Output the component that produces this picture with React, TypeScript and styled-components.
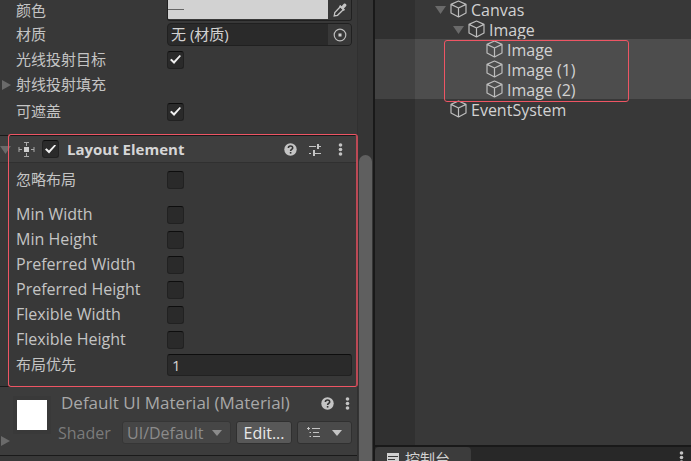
import React, { useId } from "react";
import styled, { createGlobalStyle } from "styled-components";

const GlobalStyle = createGlobalStyle`
  *, *::before, *::after { box-sizing: border-box; }
  body {
    margin: 0;
    background: #383838;
    color: #c4c4c4;
    font: 15px/20px "Open Sans", "Noto Sans CJK SC", sans-serif;
  }
  button, input, select { font: inherit; color: inherit; margin: 0; }
  svg { display: block; }
`;

const Editor = styled.div`
  display: flex;
  height: 100vh;
  overflow: hidden;
`;

const Inspector = styled.section`
  flex: 0 1 375px;
  min-width: 0;
  display: flex;
  border-right: 2px solid #191919;
`;

const InspectorBody = styled.div`
  flex: 1;
  min-width: 0;
  border-right: 1px solid #303030;
`;

const ScrollTrack = styled.div`
  flex: 0 0 15px;
  display: flex;
  padding: 155px 1px 0 1px;
  background: #353535;
`;

const ScrollThumb = styled.div`
  flex: 1;
  border-radius: 7px 7px 0 0;
  background: #5f5f5f;
`;

const Fields = styled.div<{ $bottom: number }>`
  padding-bottom: ${(p) => p.$bottom}px;
`;

const Row = styled.div<{ $height?: number; $after?: number }>`
  display: grid;
  grid-template-columns: 16px 151px minmax(0, 1fr);
  align-items: center;
  height: ${(p) => p.$height ?? 25}px;
  margin-bottom: ${(p) => p.$after ?? 0}px;
  padding-right: 5px;
`;

const Label = styled.label<{ $latin?: boolean }>`
  grid-column: 2;
  padding-bottom: 2px;
  font-size: ${(p) => (p.$latin ? 16 : 15)}px;
  white-space: nowrap;
`;

const IconButton = styled.button`
  display: grid;
  place-items: center;
  padding: 0;
  border: 0;
  background: none;
  color: #c4c4c4;
`;

const FoldButton = styled(IconButton)`
  grid-column: 1;
  justify-self: start;
  color: #6a6a6a;
`;

const RowFold = styled(FoldButton)`
  padding-left: 2px;
`;

const Check = styled.input`
  appearance: none;
  flex: none;
  display: grid;
  place-items: center;
  width: 17px;
  height: 18px;
  border: 1px solid #212121;
  border-top-color: #0d0d0d;
  border-radius: 3px;
  background: #2a2a2a;

  &:checked::after {
    content: "";
    width: 11px;
    height: 9px;
    background: #f0f0f0;
    clip-path: polygon(0 55%, 14% 42%, 36% 68%, 88% 0, 100% 12%, 37% 100%);
  }
`;

const TextField = styled.input`
  width: 100%;
  height: 22px;
  padding: 0 4px;
  border: 1px solid #212121;
  border-top-color: #0d0d0d;
  border-radius: 3px;
  background: #2a2a2a;
  color: #d2d2d2;
`;

const ColorField = styled.div`
  display: flex;
  align-self: start;
  height: 21px;
  border: 1px solid #202020;
  border-top: 0;
  border-radius: 0 0 3px 3px;
  overflow: hidden;
`;

const Swatch = styled.button`
  flex: 1;
  height: 19px;
  padding: 0;
  border: 0;
  background: linear-gradient(#666, #666) 0 9px / 16px 1px no-repeat #d2d2d2;
`;

const PickerButton = styled(IconButton)`
  width: 23px;
  background: #383838;
`;

const ObjectField = styled.div`
  display: flex;
  height: 23px;
  border: 1px solid #202020;
  border-radius: 4px;
  background: #2a2a2a;
  overflow: hidden;
`;

const ObjectName = styled.output`
  flex: 1;
  padding-left: 3px;
  color: #d2d2d2;
`;

const Component = styled.section`
  position: relative;
  border-top: 1px solid #1a1a1a;
`;

const ComponentHeader = styled.header`
  display: flex;
  align-items: center;
  height: 27px;
  margin-bottom: 4px;
  padding-right: 4px;
  border-bottom: 1px solid #303030;
  background: #3e3e3e;
`;

const HeaderFold = styled(FoldButton)`
  width: 18px;
  justify-items: start;
`;

const TitleLabel = styled.label`
  flex: 1;
  padding-left: 8px;
  font-weight: 700;
  color: #d6d6d6;
`;

const HeaderIcon = styled.span`
  width: 24px;
`;

const Actions = styled.div<{ $cell: number }>`
  display: grid;
  grid-auto-flow: column;
  grid-auto-columns: ${(p) => p.$cell}px;
  align-items: center;
`;

const Outline = styled.div`
  position: absolute;
  border: 1px solid #ee5564;
  border-radius: 3px;
  pointer-events: none;
`;

const ComponentOutline = styled(Outline)`
  inset: -2px -1px -1px 8px;
  border-right-width: 2px;
  border-right-color: #bc4955;
`;

const Material = styled.section`
  display: flex;
  height: 70px;
  border-top: 1px solid #1a1a1a;
  border-bottom: 1px solid #1a1a1a;
  background: #3c3c3c;
`;

const MaterialFold = styled(FoldButton)`
  align-self: flex-end;
  width: 13px;
  justify-items: start;
  padding: 0 0 8px 1px;
`;

const Preview = styled.div`
  width: 38px;
  height: 38px;
  margin: 9px 7px 0 0;
  border: 4px solid #393939;
  background: #fff;
`;

const MaterialBody = styled.div`
  flex: 1;
  min-width: 0;
  padding-top: 5px;
`;

const MaterialTitle = styled.div`
  display: flex;
  align-items: center;
  justify-content: space-between;
  height: 22px;
  padding: 0 0 0 3px;
  font-size: 17px;
  white-space: nowrap;
  color: #a8a8a8;
`;

const ShaderRow = styled.div`
  display: flex;
  align-items: center;
  height: 23px;
  margin-top: 7px;
  padding-right: 5px;
  font-size: 16px;
`;

const ShaderLabel = styled.label`
  flex: 1;
  color: #7b7b7b;
`;

const SelectBox = styled.div`
  display: grid;
  grid-template-columns: 1fr 12px;
  align-items: center;
  width: 109px;
  height: 23px;
  padding-right: 6px;
  border: 1px solid #363636;
  border-radius: 3px;
  background: #464646;
  color: #8b8b8b;
`;

const Select = styled.select`
  appearance: none;
  grid-area: 1 / 1 / 2 / 3;
  min-width: 0;
  padding: 0 0 0 4px;
  border: 0;
  background: none;
  opacity: 1;
`;

const SelectArrow = styled.span`
  grid-area: 1 / 2;
`;

const PushButton = styled.button`
  display: flex;
  align-items: center;
  justify-content: center;
  width: 56px;
  height: 23px;
  margin-left: 5px;
  padding: 0;
  border: 1px solid #303030;
  border-radius: 3px;
  background: #585858;
  color: #e8e8e8;
`;

const ListButton = styled(PushButton)`
  gap: 12px;
  width: 55px;
  background: #4a4a4a;
  color: #c4c4c4;
`;

const Side = styled.main`
  flex: 1;
  min-width: 0;
  display: flex;
  flex-direction: column;
`;

const Hierarchy = styled.div`
  flex: 1;
  min-height: 0;
  background: linear-gradient(90deg, #303030 40px, #383838 40px);
`;

const Tree = styled.ul`
  list-style: none;
  margin: -1px 0 0;
  padding: 0;
  font-size: 16px;
`;

const Selection = styled.ul`
  position: relative;
  list-style: none;
  margin: 0;
  padding: 0;
  background: linear-gradient(90deg, #424242 40px, #4d4d4d 40px);
`;

const SelectionOutline = styled(Outline)`
  inset: 1px auto -3px 69px;
  width: 185px;
`;

const TreeRow = styled.div<{ $depth: number }>`
  display: flex;
  align-items: center;
  height: 20px;
  padding-left: ${(p) => 60 + p.$depth * 18}px;
  color: #d2d2d2;
  white-space: nowrap;
`;

const TreeFold = styled.span`
  display: flex;
  width: 15px;
`;

const TreeName = styled.span`
  padding: 2px 0 0 4px;
`;

const TabBar = styled.nav`
  display: flex;
  flex: 0 0 16px;
  justify-content: space-between;
  padding-right: 7px;
  border-top: 2px solid #191919;
  background: #282828;
  overflow: hidden;
`;

const Tab = styled.button`
  display: flex;
  align-items: flex-start;
  gap: 6px;
  width: 96px;
  height: 24px;
  padding: 2px 0 0 12px;
  border: 0;
  border-radius: 4px 4px 0 0;
  background: #3c3c3c;
  color: #d2d2d2;
`;

const TabIcon = styled.span`
  padding-top: 4px;
`;

const TabMenu = styled(IconButton)`
  align-self: flex-start;
  padding-top: 4px;
`;

const Triangle = ({ right = false }: { right?: boolean }) => (
  <svg width={right ? 9 : 11} height={right ? 12 : 9} fill="currentColor" aria-hidden>
    <path d={right ? "M0 1 9 6 0 11Z" : "M0 1H11L5.5 9Z"} />
  </svg>
);

const CaretIcon = () => (
  <svg width="10" height="6" fill="currentColor" aria-hidden><path d="M0 0H10L5 6Z" /></svg>
);

const CubeIcon = () => (
  <svg width="17" height="18" fill="none" stroke="#bdbdbd" strokeWidth="1.2" strokeLinejoin="round" aria-hidden>
    <path d="M8.5 1 16 4.4V13L8.5 17 1 13V4.4ZM1 4.4 8.5 8 16 4.4M8.5 8V17" />
  </svg>
);

const HelpIcon = () => (
  <svg width="13" height="13" aria-hidden>
    <circle cx="6.5" cy="6.5" r="6.2" fill="#c4c4c4" />
    <path d="M4.4 5C4.4 2.3 8.7 2.3 8.7 4.9 8.7 6.3 6.6 6.4 6.6 8" fill="none" stroke="#333" strokeWidth="1.6" />
    <path d="M5.8 9h1.6v1.6H5.8z" fill="#333" />
  </svg>
);

const SlidersIcon = () => (
  <svg width="13" height="13" fill="none" stroke="#c4c4c4" aria-hidden>
    <path d="M0 3.5H7M10 3.5H12M0 10.5H2M5 10.5H12" strokeWidth="1.2" />
    <path d="M9 1V6M5 7V13" strokeWidth="2" />
  </svg>
);

const DotsIcon = () => (
  <svg width="5" height="13" fill="#c4c4c4" aria-hidden>
    <circle cx="2.5" cy="2" r="1.8" /><circle cx="2.5" cy="6.5" r="1.8" /><circle cx="2.5" cy="11" r="1.8" />
  </svg>
);

const LayoutIcon = () => (
  <svg width="17" height="17" fill="none" stroke="#aaa" aria-hidden>
    <path d="M6 6h5v5H6z" fill="#d0d0d0" stroke="none" />
    <path d="M6 1.5h5M8.5 2v3M6 15.5h5M8.5 12v3M1 6v5M1 8.5h3M16 6v5M13 8.5h3" />
  </svg>
);

const DropperIcon = () => (
  <svg width="14" height="14" fill="none" aria-hidden>
    <path d="M7.5 3.5 10.5 6.5 4.5 12.3 1.2 13 1.8 9.5Z" stroke="#c4c4c4" strokeWidth="1.3" />
    <path d="M6 3.2 7.2 2 8.6 3.2 10.6 1C12.3-.3 14.3 1.6 13 3.3L10.9 5.4 12 6.8 10.8 8Z" fill="#c4c4c4" />
  </svg>
);

const TargetIcon = () => (
  <svg width="14" height="14" fill="none" aria-hidden>
    <circle cx="7" cy="7" r="5.8" stroke="#bcbcbc" strokeWidth="1.2" />
    <path d="M5.5 5.5h3v3h-3z" fill="#d0d0d0" />
  </svg>
);

const ListIcon = () => (
  <svg width="13" height="11" fill="none" stroke="currentColor" aria-hidden>
    <path d="M0 1.5H3M5 1.5H13M2.5 5.5H4M6 5.5H12M2.5 9.5H4M6 9.5H13M1.5 0V3" />
  </svg>
);

const ConsoleIcon = () => (
  <svg width="12" height="12" aria-hidden>
    <path d="M0 0H12V12H0Z" fill="#d0d0d0" />
    <path d="M1 3.5H11M1 6.5H8M1 9.5H11" stroke="#3c3c3c" />
  </svg>
);

type CheckRowProps = { label: string; latin?: boolean; checked?: boolean; height?: number; after?: number };

const CheckRow = ({ label, latin, checked, height, after }: CheckRowProps) => {
  const id = useId();
  return (
    <Row $height={height} $after={after}>
      <Label htmlFor={id} $latin={latin}>{label}</Label>
      <Check id={id} type="checkbox" defaultChecked={checked} />
    </Row>
  );
};

const TreeItem = ({ name, depth, open }: { name: string; depth: number; open?: boolean }) => (
  <TreeRow $depth={depth}>
    <TreeFold>{open && <FoldButton aria-label={`折叠 ${name}`}><Triangle /></FoldButton>}</TreeFold>
    <CubeIcon />
    <TreeName>{name}</TreeName>
  </TreeRow>
);

const properties = ["Min Width", "Min Height", "Preferred Width", "Preferred Height", "Flexible Width", "Flexible Height"];
const selected = ["Image", "Image (1)", "Image (2)"];

export default function App() {
  return (
    <>
      <GlobalStyle />
      <Editor>
        <Inspector>
          <InspectorBody>
            <Fields $bottom={9}>
              <Row $height={22}>
                <Label htmlFor="color">颜色</Label>
                <ColorField>
                  <Swatch id="color" />
                  <PickerButton aria-label="吸管"><DropperIcon /></PickerButton>
                </ColorField>
              </Row>
              <Row>
                <Label htmlFor="material">材质</Label>
                <ObjectField>
                  <ObjectName id="material">无 (材质)</ObjectName>
                  <PickerButton aria-label="选择材质"><TargetIcon /></PickerButton>
                </ObjectField>
              </Row>
              <CheckRow label="光线投射目标" checked />
              <Row>
                <RowFold aria-label="展开射线投射填充"><Triangle right /></RowFold>
                <Label as="span">射线投射填充</Label>
              </Row>
              <CheckRow label="可遮盖" checked height={29} />
            </Fields>

            <Component>
              <ComponentHeader>
                <HeaderFold aria-label="折叠组件"><Triangle /></HeaderFold>
                <HeaderIcon><LayoutIcon /></HeaderIcon>
                <Check id="enabled" type="checkbox" defaultChecked />
                <TitleLabel htmlFor="enabled">Layout Element</TitleLabel>
                <Actions $cell={25}>
                  <IconButton aria-label="帮助"><HelpIcon /></IconButton>
                  <IconButton aria-label="预设"><SlidersIcon /></IconButton>
                  <IconButton aria-label="更多"><DotsIcon /></IconButton>
                </Actions>
              </ComponentHeader>
              <Fields $bottom={9}>
                <CheckRow label="忽略布局" after={10} />
                {properties.map((name) => <CheckRow key={name} label={name} latin />)}
                <Row>
                  <Label htmlFor="priority">布局优先</Label>
                  <TextField id="priority" defaultValue="1" />
                </Row>
              </Fields>
              <ComponentOutline />
            </Component>

            <Material>
              <MaterialFold aria-label="展开材质"><Triangle right /></MaterialFold>
              <Preview />
              <MaterialBody>
                <MaterialTitle>
                  Default UI Material (Material)
                  <Actions $cell={20}>
                    <IconButton aria-label="帮助"><HelpIcon /></IconButton>
                    <IconButton aria-label="更多"><DotsIcon /></IconButton>
                  </Actions>
                </MaterialTitle>
                <ShaderRow>
                  <ShaderLabel htmlFor="shader">Shader</ShaderLabel>
                  <SelectBox>
                    <Select id="shader" disabled><option>UI/Default</option></Select>
                    <SelectArrow><CaretIcon /></SelectArrow>
                  </SelectBox>
                  <PushButton>Edit...</PushButton>
                  <ListButton aria-label="预设列表"><ListIcon /><CaretIcon /></ListButton>
                </ShaderRow>
              </MaterialBody>
            </Material>
          </InspectorBody>
          <ScrollTrack><ScrollThumb /></ScrollTrack>
        </Inspector>

        <Side>
          <Hierarchy>
            <Tree>
              <li><TreeItem name="Canvas" depth={0} open /></li>
              <li>
                <TreeItem name="Image" depth={1} open />
                <Selection>
                  {selected.map((name) => <li key={name}><TreeItem name={name} depth={2} /></li>)}
                  <SelectionOutline />
                </Selection>
              </li>
              <li><TreeItem name="EventSystem" depth={0} /></li>
            </Tree>
          </Hierarchy>
          <TabBar>
            <Tab><TabIcon><ConsoleIcon /></TabIcon>控制台</Tab>
            <TabMenu aria-label="更多"><DotsIcon /></TabMenu>
          </TabBar>
        </Side>
      </Editor>
    </>
  );
}
